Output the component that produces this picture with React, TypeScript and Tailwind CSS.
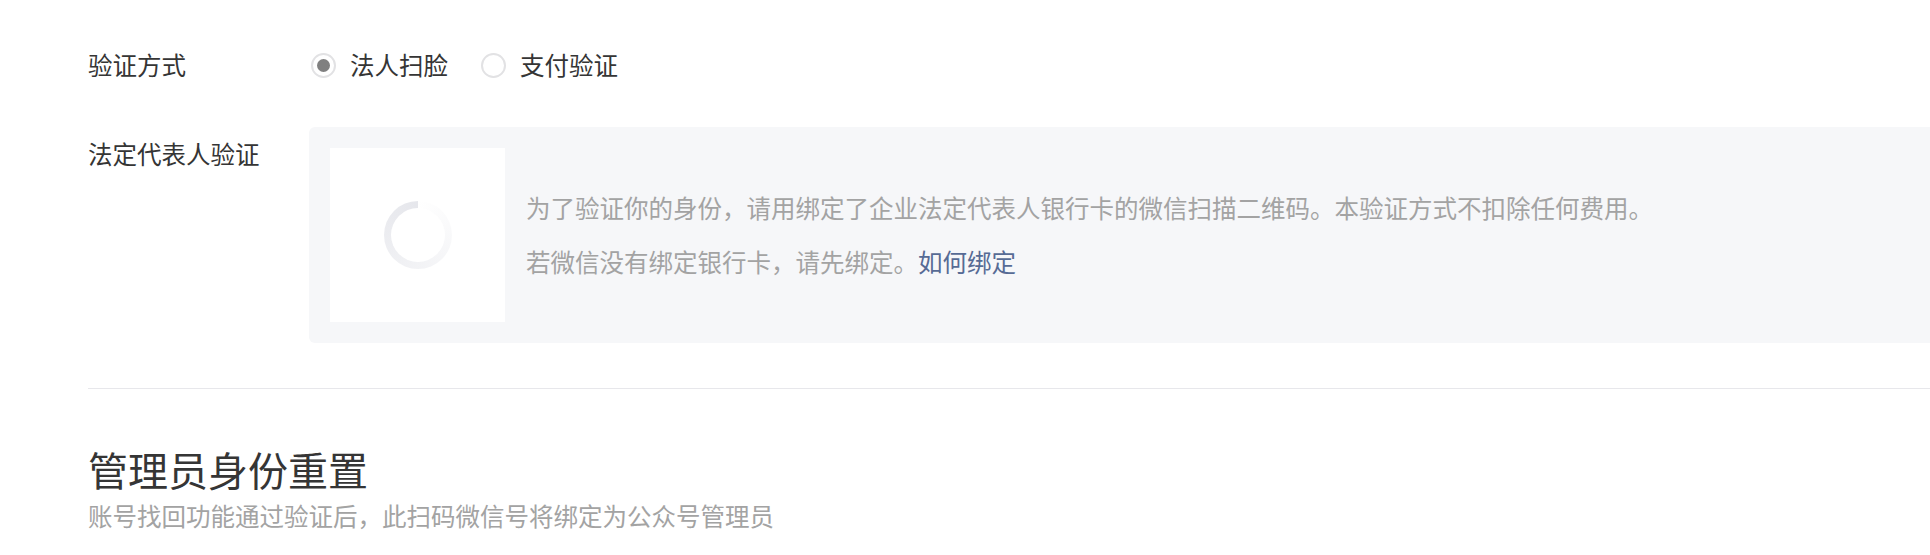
import React from "react";

const font = { fontFamily: '"Noto Sans CJK SC", "Noto Sans", sans-serif' };

function Radio({ checked, label }: { checked?: boolean; label: string }) {
  return (
    <label className="flex items-center gap-[14px]">
      <span className="flex h-[25px] w-[25px] items-center justify-center rounded-full border-2 border-[#e2e2e4] bg-white">
        {checked && <span className="h-[13px] w-[13px] rounded-full bg-[#808080]" />}
      </span>
      <span>{label}</span>
    </label>
  );
}

export default function App() {
  return (
    <div className="h-[555px] w-full overflow-hidden bg-white text-[24.5px] text-[#353535]" style={font}>
      <div className="pl-[88px] pt-[45px]">
        <div className="flex h-[40px] items-center leading-[40px]">
          <div className="w-[221px] shrink-0">验证方式</div>
          <div className="flex items-center gap-[33px] pl-[2px]">
            <Radio checked label="法人扫脸" />
            <Radio label="支付验证" />
          </div>
        </div>

        <div className="mt-[42px] flex">
          <div className="w-[221px] shrink-0 pt-[10px] leading-[34px]">法定代表人验证</div>
          <div className="flex flex-1 items-center gap-[21px] rounded-l-[6px] bg-[#f6f7f9] p-[21px]">
            <div className="flex h-[174px] w-[175px] shrink-0 items-center justify-center bg-white">
              <div className="flex h-[68px] w-[68px] items-center justify-center rounded-full bg-[conic-gradient(from_0deg,rgba(230,231,236,0)_0deg,#e6e7ec_355deg,#e6e7ec_360deg)]">
                <div className="h-[54px] w-[54px] rounded-full bg-white" />
              </div>
            </div>
            <div className="flex flex-col gap-[20px] leading-[34px] text-[#a3a3a3]">
              <p>为了验证你的身份，请用绑定了企业法定代表人银行卡的微信扫描二维码。本验证方式不扣除任何费用。</p>
              <p>
                若微信没有绑定银行卡，请先绑定。<a className="text-[#576b95]">如何绑定</a>
              </p>
            </div>
          </div>
        </div>

        <div className="mt-[45px] h-px bg-[#e7e7eb]" />

        <div className="pt-[52px]">
          <h2 className="text-[40px] font-normal leading-[56px] text-[#353535]">管理员身份重置</h2>
          <p className="mt-[2px] leading-[34px] text-[#a3a3a3]">账号找回功能通过验证后，此扫码微信号将绑定为公众号管理员</p>
        </div>
      </div>
    </div>
  );
}
